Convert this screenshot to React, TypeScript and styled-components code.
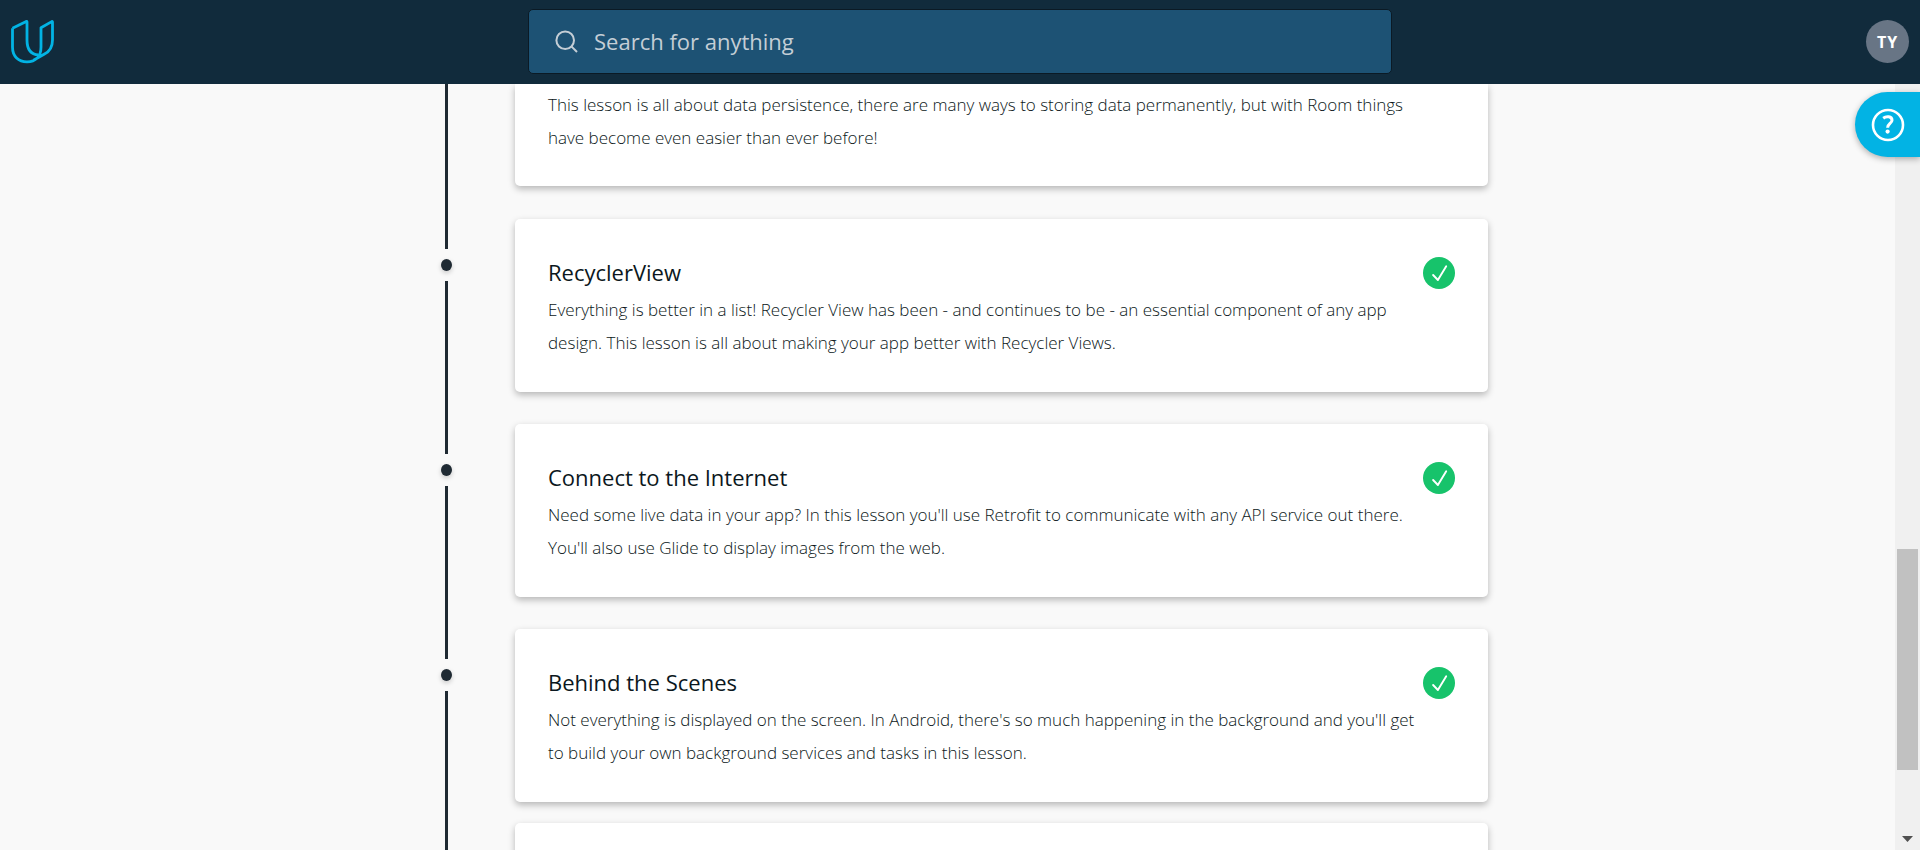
import React from "react";
import styled, { createGlobalStyle } from "styled-components";

const GlobalStyle = createGlobalStyle`
  *, *::before, *::after { box-sizing: border-box; }
  body {
    margin: 0;
    background: #f9f9f9;
    font-family: "Open Sans", "Liberation Sans", sans-serif;
    color: #0b1720;
  }
`;

const Page = styled.div`
  height: 100vh;
  display: flex;
  flex-direction: column;
  overflow: hidden;
`;

const Header = styled.header`
  flex: none;
  height: 84px;
  display: grid;
  grid-template-columns: 1fr minmax(0, 864px) 1fr;
  align-items: center;
  padding: 0 11px 1px;
  background: #112b3c;
  z-index: 2;
`;

const LogoLink = styled.a`
  justify-self: start;
  display: flex;
`;

const SearchBox = styled.label`
  display: flex;
  align-items: center;
  gap: 16px;
  height: 65px;
  padding: 0 26px;
  border: 1px solid #0b1a25;
  border-radius: 5px;
  background: #1d5274;
`;

const SearchInput = styled.input`
  flex: 1;
  min-width: 0;
  padding: 0 0 2px;
  border: 0;
  outline: 0;
  background: transparent;
  color: #ffffff;
  font: 400 22px/32px "Open Sans", "Liberation Sans", sans-serif;

  &::placeholder {
    color: #c4ced6;
    opacity: 1;
  }
`;

const Avatar = styled.button`
  justify-self: end;
  width: 43px;
  height: 43px;
  padding: 0;
  border: 0;
  border-radius: 50%;
  background: #687585;
  color: #ffffff;
  font: 700 16px/24px "Open Sans", "Liberation Sans", sans-serif;
  letter-spacing: 1px;
`;

const Body = styled.div`
  position: relative;
  flex: 1;
  min-height: 0;
  display: flex;
`;

const Main = styled.main`
  flex: 1;
  min-width: 0;
  overflow: hidden;
`;

const Timeline = styled.ol`
  max-width: 1081px;
  margin: 0 auto;
  padding: 0;
  list-style: none;
`;

const Row = styled.li<{ $gap: number }>`
  display: grid;
  grid-template-columns: 79px minmax(0, 1fr);
  column-gap: 29px;

  & > article {
    margin-bottom: ${(p) => p.$gap}px;
  }
`;

const Rail = styled.div`
  display: flex;
  flex-direction: column;
  align-items: center;
`;

const Line = styled.div<{ $lead?: boolean }>`
  width: 3px;
  background: #1f2a33;
  ${(p) => (p.$lead ? "height: 30px;" : "flex: 1;")}
`;

const Marker = styled.div`
  display: grid;
  place-items: center;
  height: 32px;

  &::before {
    content: "";
    width: 11px;
    height: 12px;
    border-radius: 50%;
    background: #1f2a33;
    box-shadow: 0 2px 5px rgba(0, 0, 0, 0.2);
  }
`;

const Card = styled.article<{ $continued?: boolean }>`
  display: grid;
  grid-template-columns: minmax(0, 1fr) 32px;
  align-items: center;
  padding: ${(p) => (p.$continued ? "4px 33px 32px" : "33px")};
  border-radius: ${(p) => (p.$continued ? "0 0 5px 5px" : "5px")};
  background: #ffffff;
  box-shadow: 0 3px 7px rgba(0, 0, 0, 0.27);
`;

const Title = styled.h2`
  margin: 0 0 1px;
  font-size: 22px;
  line-height: 40px;
  font-weight: 500;
`;

const Description = styled.p`
  grid-column: 1;
  margin: 0;
  color: #0b1720;
  font-size: 17px;
  line-height: 33px;
  font-weight: 300;
`;

const ScrollTrack = styled.div`
  flex: none;
  width: 25px;
  padding: 0 2px;
  display: grid;
  grid-template-rows: 465fr 221fr 80fr;
  background: #f0f0f0;
`;

const ScrollThumb = styled.div`
  grid-row: 2;
  background: #c1c1c1;
`;

const ScrollArrow = styled.svg`
  grid-row: 3;
  align-self: end;
  justify-self: center;
  margin-bottom: 8px;
`;

const HelpButton = styled.button`
  position: absolute;
  top: 8px;
  right: 0;
  width: 65px;
  height: 65px;
  padding: 0;
  display: grid;
  place-items: center;
  border: 0;
  border-radius: 33px 0 0 33px;
  background: #02b3e4;
  box-shadow: 0 2px 6px rgba(0, 0, 0, 0.3);
`;

const Logo = () => (
  <svg width="43" height="44" viewBox="11 20 43 44" fill="none" stroke="#02b3e4" strokeWidth="2.8" strokeLinejoin="round">
    <path d="M12.5 28.3 L26.2 21.4 Q27 21.2 27 22 V40 C27 49.5 31.5 54.5 38.5 55" />
    <path d="M12.5 28.3 V47 C12.5 56.5 18.5 61.8 27 61.8 C35.5 61.8 41 56.5 41 47 V27.8 L51.7 21.6 Q52.5 21.3 52.5 22 V40 C52.5 47.5 49.5 51.5 44.5 54 L33.5 60.3" />
  </svg>
);

const SearchIcon = () => (
  <svg width="23" height="23" viewBox="0 0 23 23" fill="none" stroke="#c4ced6" strokeWidth="2" aria-hidden="true">
    <circle cx="10.2" cy="10.2" r="8.8" />
    <path d="M16.4 16.4 L22 22" />
  </svg>
);

const DoneIcon = () => (
  <svg width="32" height="32" viewBox="0 0 32 32" role="img" aria-label="Completed">
    <circle cx="16" cy="16" r="16" fill="#17c36b" />
    <path d="M10.1 18 L14.9 23 L23.2 9.2" fill="none" stroke="#ffffff" strokeWidth="1.9" strokeLinecap="round" strokeLinejoin="round" />
  </svg>
);

const HelpIcon = () => (
  <svg width="34" height="34" viewBox="0 0 34 34" fill="none" stroke="#ffffff" aria-hidden="true">
    <circle cx="17" cy="17" r="15" strokeWidth="2.6" />
    <path d="M12.2 10.2 C15.2 7.9 21 8 21 12.2 C21 15.4 16.6 15.6 16.6 19.8" strokeWidth="3" />
    <circle cx="16.6" cy="23.6" r="2.1" fill="#ffffff" stroke="none" />
  </svg>
);

type Lesson = { title: string; text: string; gap: number };

const lessons: Lesson[] = [
  {
    title: "RecyclerView",
    text: "Everything is better in a list! Recycler View has been - and continues to be - an essential component of any app design. This lesson is all about making your app better with Recycler Views.",
    gap: 32,
  },
  {
    title: "Connect to the Internet",
    text: "Need some live data in your app? In this lesson you'll use Retrofit to communicate with any API service out there. You'll also use Glide to display images from the web.",
    gap: 32,
  },
  {
    title: "Behind the Scenes",
    text: "Not everything is displayed on the screen. In Android, there's so much happening in the background and you'll get to build your own background services and tasks in this lesson.",
    gap: 21,
  },
];

export default function App() {
  return (
    <Page>
      <GlobalStyle />
      <Header>
        <LogoLink href="#" aria-label="Home">
          <Logo />
        </LogoLink>
        <SearchBox>
          <SearchIcon />
          <SearchInput type="text" aria-label="Search" placeholder="Search for anything" />
        </SearchBox>
        <Avatar type="button">TY</Avatar>
      </Header>
      <Body>
        <Main>
          <Timeline>
            <Row $gap={33}>
              <Rail>
                <Line />
              </Rail>
              <Card $continued>
                <Description>
                  This lesson is all about data persistence, there are many ways to storing data permanently, but with
                  Room things have become even easier than ever before!
                </Description>
              </Card>
            </Row>
            {lessons.map((lesson) => (
              <Row key={lesson.title} $gap={lesson.gap}>
                <Rail>
                  <Line $lead />
                  <Marker />
                  <Line />
                </Rail>
                <Card>
                  <Title>{lesson.title}</Title>
                  <DoneIcon />
                  <Description>{lesson.text}</Description>
                </Card>
              </Row>
            ))}
            <Row $gap={0}>
              <Rail>
                <Line />
              </Rail>
              <Card />
            </Row>
          </Timeline>
        </Main>
        <ScrollTrack aria-hidden="true">
          <ScrollThumb />
          <ScrollArrow width="11" height="6" viewBox="0 0 11 6">
            <path d="M0 0 H11 L5.5 6 Z" fill="#505050" />
          </ScrollArrow>
        </ScrollTrack>
        <HelpButton type="button" aria-label="Help">
          <HelpIcon />
        </HelpButton>
      </Body>
    </Page>
  );
}
